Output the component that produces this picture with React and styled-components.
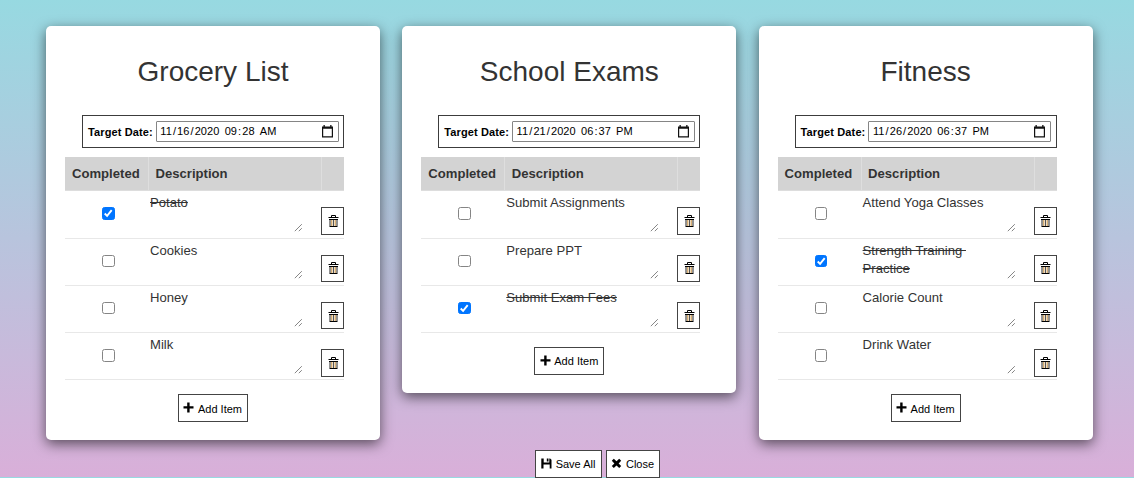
import React from "react";
import styled, { createGlobalStyle } from "styled-components";

const GlobalStyle = createGlobalStyle`
  * { box-sizing: border-box; }
  html { background: #97d9e1; }
  body {
    margin: 0;
    height: 478px;
    overflow: hidden;
    font-family: "Liberation Sans", Arial, sans-serif;
    font-size: 13.1px;
    color: #333;
  }
`;

const Page = styled.main`
  height: 477px;
  padding: 25.5px 41.5px 0 46px;
  background: linear-gradient(0deg, #d9afd9 0%, #97d9e1 100%);
`;

const Board = styled.div`
  display: grid;
  grid-template-columns: repeat(3, 334px);
  column-gap: 22.3px;
  align-items: start;
  height: 424.5px;
`;

const Card = styled.section`
  display: flex;
  flex-direction: column;
  padding: 0 36px 18px 19px;
  border-radius: 5px;
  background: #fff;
  box-shadow: 0 4px 13px rgba(0, 0, 0, 0.58);
`;

const Title = styled.h1`
  margin: 30px -17px 0 0;
  height: 32px;
  line-height: 32px;
  font-size: 28px;
  font-weight: 400;
  text-align: center;
`;

const DateBox = styled.div`
  align-self: flex-end;
  display: flex;
  align-items: center;
  gap: 3px;
  width: 262px;
  height: 33px;
  margin-top: 27.5px;
  padding: 0 4.5px 0 5px;
  border: 1px solid #3c3c3c;
  font-size: 11px;
  color: #000;
`;

const DateLabel = styled.span`
  font-weight: 700;
  letter-spacing: 0.12px;
  white-space: nowrap;
  padding-top: 1px;
`;

const DateField = styled.div`
  display: flex;
  align-items: center;
  width: 183px;
  height: 21px;
  padding: 0 5px 0 2.5px;
  border: 1px solid #858585;
  border-radius: 1px;
  white-space: pre;
  svg { margin-left: auto; }
`;

const DateText = styled.span`
  padding-bottom: 1px;
  letter-spacing: 0.09px;
`;

const Segment = styled.span`
  padding: 0 1px;
`;

const Table = styled.div`
  margin-top: 9px;
  width: 279px;
`;

const HeadRow = styled.div`
  display: grid;
  grid-template-columns: 83px 173px 1fr;
  height: 34.4px;
  background: #d3d3d3;
  border-bottom: 1px solid #ddd;
  font-weight: 700;
`;

const HeadCell = styled.div`
  padding-left: 7px;
  line-height: 33px;
  & + & { padding-left: 6.5px; border-left: 1px solid #dedede; }
`;

const Row = styled.div`
  display: grid;
  grid-template-columns: 85px 153px 1fr;
  height: 47.25px;
  border-bottom: 1px solid #e8e8e8;
`;

const CheckCell = styled.div`
  padding: 16px 0 0 37px;
`;

const CheckBox = styled.div`
  width: 12.5px;
  height: 12.5px;
  border: 1px solid ${(p) => (p.$on ? "#0075ff" : "#858585")};
  border-radius: 2.5px;
  background: ${(p) => (p.$on ? "#0075ff" : "#fff")};
  svg { display: block; }
`;

const Note = styled.div`
  display: flex;
  justify-content: space-between;
  align-items: flex-start;
  padding-top: 2.9px;
  line-height: 18px;
  white-space: pre;
  text-decoration: ${(p) => (p.$done ? "line-through" : "none")};
  svg { flex: none; align-self: flex-end; margin-bottom: 5.5px; }
`;

const Button = styled.button`
  display: flex;
  align-items: center;
  justify-content: center;
  gap: 3.5px;
  width: ${(p) => p.$w}px;
  height: 27.5px;
  margin: 0;
  padding: ${(p) => (p.$icon ? "0 0 0 1px" : "1px 0 0")};
  border: 1px solid #444;
  background: #fff;
  color: #000;
  font: 11px "Liberation Sans", Arial, sans-serif;
  white-space: nowrap;
  svg { flex: none; ${(p) => (p.$icon ? "" : "margin: -2px 0 0 -0.5px;")} }
`;

const DeleteCell = styled.div`
  display: flex;
  justify-content: flex-end;
  padding-top: 16px;
`;

const AddBar = styled.div`
  display: flex;
  justify-content: center;
  padding: 14px 0 0 17px;
`;

const Footer = styled.footer`
  display: flex;
  justify-content: center;
  gap: 4px;
  padding-left: 57px;
  width: 1046px;
`;

const PlusIcon = () => (
  <svg width="11" height="11" viewBox="0 0 11 11">
    <path d="M4.2.5h2.4v3.8h3.9v2.3H6.6v3.9H4.2V6.6H.5V4.3h3.7z" />
  </svg>
);

const TrashIcon = () => (
  <svg width="11" height="12" viewBox="0 0 11 12">
    <path d="M3.5 2V.5h4V2" fill="none" stroke="#000" strokeWidth="1" />
    <path d="M.5 2h10v1H.5zM1 4h9v1H1zM1.5 11h8v1h-8z" />
    <path d="M2 5v6M9 5v6" stroke="#222" strokeWidth="1" />
    <path d="M3.8 5v6" stroke="#c58a35" strokeWidth="1" />
    <path d="M5.5 5v6" stroke="#555" strokeWidth="1" />
    <path d="M7.2 5v6" stroke="#c58a35" strokeWidth="1" />
  </svg>
);

const SaveIcon = () => (
  <svg width="11" height="11" viewBox="0 0 11 11">
    <path d="M.3.5h2.4v4h5.6v-4h.8l1.4 1.3v8.7H8.7V6.5H2.5v4H.3z" />
    <path d="M5.8.5h1.7v3H5.8z" />
  </svg>
);

const CloseIcon = () => (
  <svg width="11" height="11" viewBox="0 0 11 11">
    <path d="M2.8.8l2.7 2.5L8.2.8l2 1.9-2.6 2.7 2.6 2.6-2 2-2.7-2.6L2.8 10l-2-2 2.6-2.6L.8 2.7z" />
  </svg>
);

const CalendarIcon = () => (
  <svg width="11" height="13" viewBox="0 0 11 13">
    <path d="M.6 2.5h9.8v9.4H.6z" fill="none" stroke="#111" strokeWidth="1.2" />
    <path d="M0 1.4h11v2.4H0zM1.5 0h1.3v2H1.5zM8.2 0h1.3v2H8.2z" fill="#111" />
  </svg>
);

const CheckMark = () => (
  <svg width="10.5" height="10.5" viewBox="0 0 10.5 10.5">
    <path d="M1.7 5.5l2.4 2.4 4.6-5.8" fill="none" stroke="#fff" strokeWidth="1.9" />
  </svg>
);

const GripIcon = () => (
  <svg width="9" height="9" viewBox="0 0 9 9">
    <path d="M.8 8.2l7-7M4.8 8.2l3-3" fill="none" stroke="#777" strokeWidth="0.9" />
  </svg>
);

const lists = [
  {
    title: "Grocery List",
    date: ["11", "16", "2020", "09", "28", "AM"],
    items: [["Potato", true], ["Cookies"], ["Honey"], ["Milk"]],
  },
  {
    title: "School Exams",
    date: ["11", "21", "2020", "06", "37", "PM"],
    items: [["Submit Assignments"], ["Prepare PPT"], ["Submit Exam Fees", true]],
  },
  {
    title: "Fitness",
    date: ["11", "26", "2020", "06", "37", "PM"],
    items: [
      ["Attend Yoga Classes"],
      ["Strength Training \nPractice", true],
      ["Calorie Count"],
      ["Drink Water"],
    ],
  },
];

const separators = ["/", "/", " ", ":", " ", ""];

function TodoItem({ text, done }) {
  return (
    <Row>
      <CheckCell>
        <CheckBox $on={done} role="checkbox" aria-checked={!!done}>
          {done && <CheckMark />}
        </CheckBox>
      </CheckCell>
      <Note $done={done}>
        <span>{text}</span>
        <GripIcon />
      </Note>
      <DeleteCell>
        <Button $w={23} $icon aria-label="Delete">
          <TrashIcon />
        </Button>
      </DeleteCell>
    </Row>
  );
}

function TodoCard({ title, date, items }) {
  return (
    <Card>
      <Title>{title}</Title>
      <DateBox>
        <DateLabel>Target Date:</DateLabel>
        <DateField>
          <DateText>
            {date.map((part, i) => (
              <React.Fragment key={i}>
                <Segment>{part}</Segment>
                {separators[i]}
              </React.Fragment>
            ))}
          </DateText>
          <CalendarIcon />
        </DateField>
      </DateBox>
      <Table>
        <HeadRow>
          <HeadCell>Completed</HeadCell>
          <HeadCell>Description</HeadCell>
          <HeadCell />
        </HeadRow>
        {items.map(([text, done]) => (
          <TodoItem key={text} text={text} done={done} />
        ))}
      </Table>
      <AddBar>
        <Button $w={70}>
          <PlusIcon />
          Add Item
        </Button>
      </AddBar>
    </Card>
  );
}

export default function App() {
  return (
    <>
      <GlobalStyle />
      <Page>
        <Board>
          {lists.map((list) => (
            <TodoCard key={list.title} {...list} />
          ))}
        </Board>
        <Footer>
          <Button $w={67}>
            <SaveIcon />
            Save All
          </Button>
          <Button $w={54}>
            <CloseIcon />
            Close
          </Button>
        </Footer>
      </Page>
    </>
  );
}
